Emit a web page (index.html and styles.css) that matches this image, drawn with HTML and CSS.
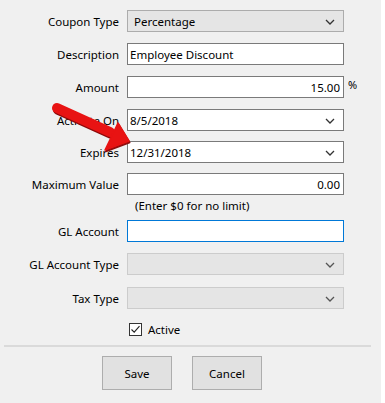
FILE: index.html
```html
<!DOCTYPE html>
<html lang="en">
<head>
    <meta charset="UTF-8">
    <title>Coupon</title>
    <link rel="stylesheet" href="styles.css">
</head>
<body>
    <div id="panel">
        <div class="form">
            <div class="row">
                <label>Coupon Type</label>
                <div class="field select">
                    <span class="val pad">Percentage</span>
                    <svg class="chev" width="10" height="6" viewBox="0 0 10 6"><polyline points="1,1 5,5 9,1" fill="none" stroke="#333" stroke-width="1.3"/></svg>
                </div>
            </div>
            <div class="row">
                <label>Description</label>
                <div class="field"><span class="val">Employee Discount</span></div>
            </div>
            <div class="row">
                <label>Amount</label>
                <div class="field right"><span class="val">15.00</span></div>
                <span class="unit">%</span>
            </div>
            <div class="row tight">
                <label>Activate On</label>
                <div class="field">
                    <span class="val">8/5/2018</span>
                    <svg class="chev" width="10" height="6" viewBox="0 0 10 6"><polyline points="1,1 5,5 9,1" fill="none" stroke="#333" stroke-width="1.3"/></svg>
                </div>
            </div>
            <div class="row tight">
                <label>Expires</label>
                <div class="field">
                    <span class="val">12/31/2018</span>
                    <svg class="chev" width="10" height="6" viewBox="0 0 10 6"><polyline points="1,1 5,5 9,1" fill="none" stroke="#333" stroke-width="1.3"/></svg>
                </div>
            </div>
            <div class="row wide">
                <label>Maximum Value</label>
                <div class="field right"><span class="val">0.00</span></div>
            </div>
            <p class="hint">(Enter $0 for no limit)</p>
            <div class="row">
                <label>GL Account</label>
                <div class="field focus"></div>
            </div>
            <div class="row wide">
                <label>GL Account Type</label>
                <div class="field disabled">
                    <svg class="chev" width="10" height="6" viewBox="0 0 10 6"><polyline points="1,1 5,5 9,1" fill="none" stroke="#555" stroke-width="1.3"/></svg>
                </div>
            </div>
            <div class="row">
                <label>Tax Type</label>
                <div class="field disabled">
                    <svg class="chev" width="10" height="6" viewBox="0 0 10 6"><polyline points="1,1 5,5 9,1" fill="none" stroke="#555" stroke-width="1.3"/></svg>
                </div>
            </div>
            <div class="check-row">
                <span class="box">
                    <svg width="11" height="11" viewBox="0 0 11 11"><polyline points="1.5,5.5 4.2,8.2 9.5,2.2" fill="none" stroke="#222" stroke-width="1.1"/></svg>
                </span>
                <span>Active</span>
            </div>
        </div>
        <div class="sep"></div>
        <div class="buttons">
            <button class="btn">Save</button>
            <button class="btn">Cancel</button>
        </div>
    </div>
    <svg class="arrow" width="385" height="403" viewBox="0 0 385 403">
        <g fill="#8e0a0a" stroke="#8e0a0a" transform="translate(0.8,1.6)">
            <line x1="57" y1="108" x2="110" y2="132" stroke-width="10" stroke-linecap="round"/>
            <polygon points="129,141 118,123 105,150" stroke-width="1.5" stroke-linejoin="round"/>
        </g>
        <g fill="#e81313" stroke="#e81313">
            <line x1="57" y1="108" x2="110" y2="132" stroke-width="10" stroke-linecap="round"/>
            <polygon points="129,141 118,123 105,150" stroke-width="1.5" stroke-linejoin="round"/>
        </g>
    </svg>
</body>
</html>
```

FILE: styles.css
```css
html, body {
    margin: 0;
    padding: 0;
    background: #ffffff;
    font-family: 'Noto Sans', 'Open Sans', sans-serif;
    font-size: 11.5px;
    color: #000;
}
#panel {
    width: 381px;
    height: 403px;
    background: #f0f0f0;
    padding-top: 10px;
    box-sizing: border-box;
}
.form {
    display: flex;
    flex-direction: column;
}
.row {
    display: flex;
    align-items: center;
    height: 22px;
    margin-bottom: 11px;
}
.row.tight {
    margin-bottom: 10px;
}
.row.wide {
    margin-bottom: 12px;
}
.row label {
    width: 119px;
    padding-right: 8px;
    text-align: right;
    white-space: nowrap;
}
.field {
    width: 217px;
    height: 22px;
    box-sizing: border-box;
    border: 1px solid #7a7a7a;
    background: #fff;
    display: flex;
    align-items: center;
    padding: 0 3px 0 2px;
    position: relative;
}
.field.right {
    justify-content: flex-end;
}
.field.select {
    background: #e5e5e5;
    border-color: #acacac;
}
.field.focus {
    border-color: #0078d7;
}
.field.disabled {
    background: #e5e5e5;
    border-color: #cccccc;
}
.val.pad {
    padding-left: 4px;
}
.chev {
    position: absolute;
    right: 8px;
    top: 8px;
}
.unit {
    font-size: 11px;
    align-self: flex-start;
    margin-left: 4px;
    margin-top: 1px;
}
.hint {
    margin: -9px 0 6px 135px;
    height: 16px;
    line-height: 16px;
}
.check-row {
    display: flex;
    align-items: center;
    gap: 6px;
    margin-left: 129px;
    margin-top: 2px;
    height: 14px;
}
.box {
    width: 13px;
    height: 13px;
    box-sizing: border-box;
    border: 1px solid #333;
    background: #fff;
    display: flex;
    align-items: center;
    justify-content: center;
}
.sep {
    margin: 9px 10px 0 4px;
    height: 2px;
    background: #dadada;
}
.buttons {
    display: flex;
    gap: 20px;
    margin: 9px 0 0 102px;
}
.btn {
    width: 70px;
    height: 34px;
    background: #e1e1e1;
    border: 1px solid #adadad;
    font-family: 'Noto Sans', 'Open Sans', sans-serif;
    font-size: 11.5px;
    color: #000;
    padding: 0;
}
.arrow {
    position: absolute;
    left: 0;
    top: 0;
    pointer-events: none;
}
```
